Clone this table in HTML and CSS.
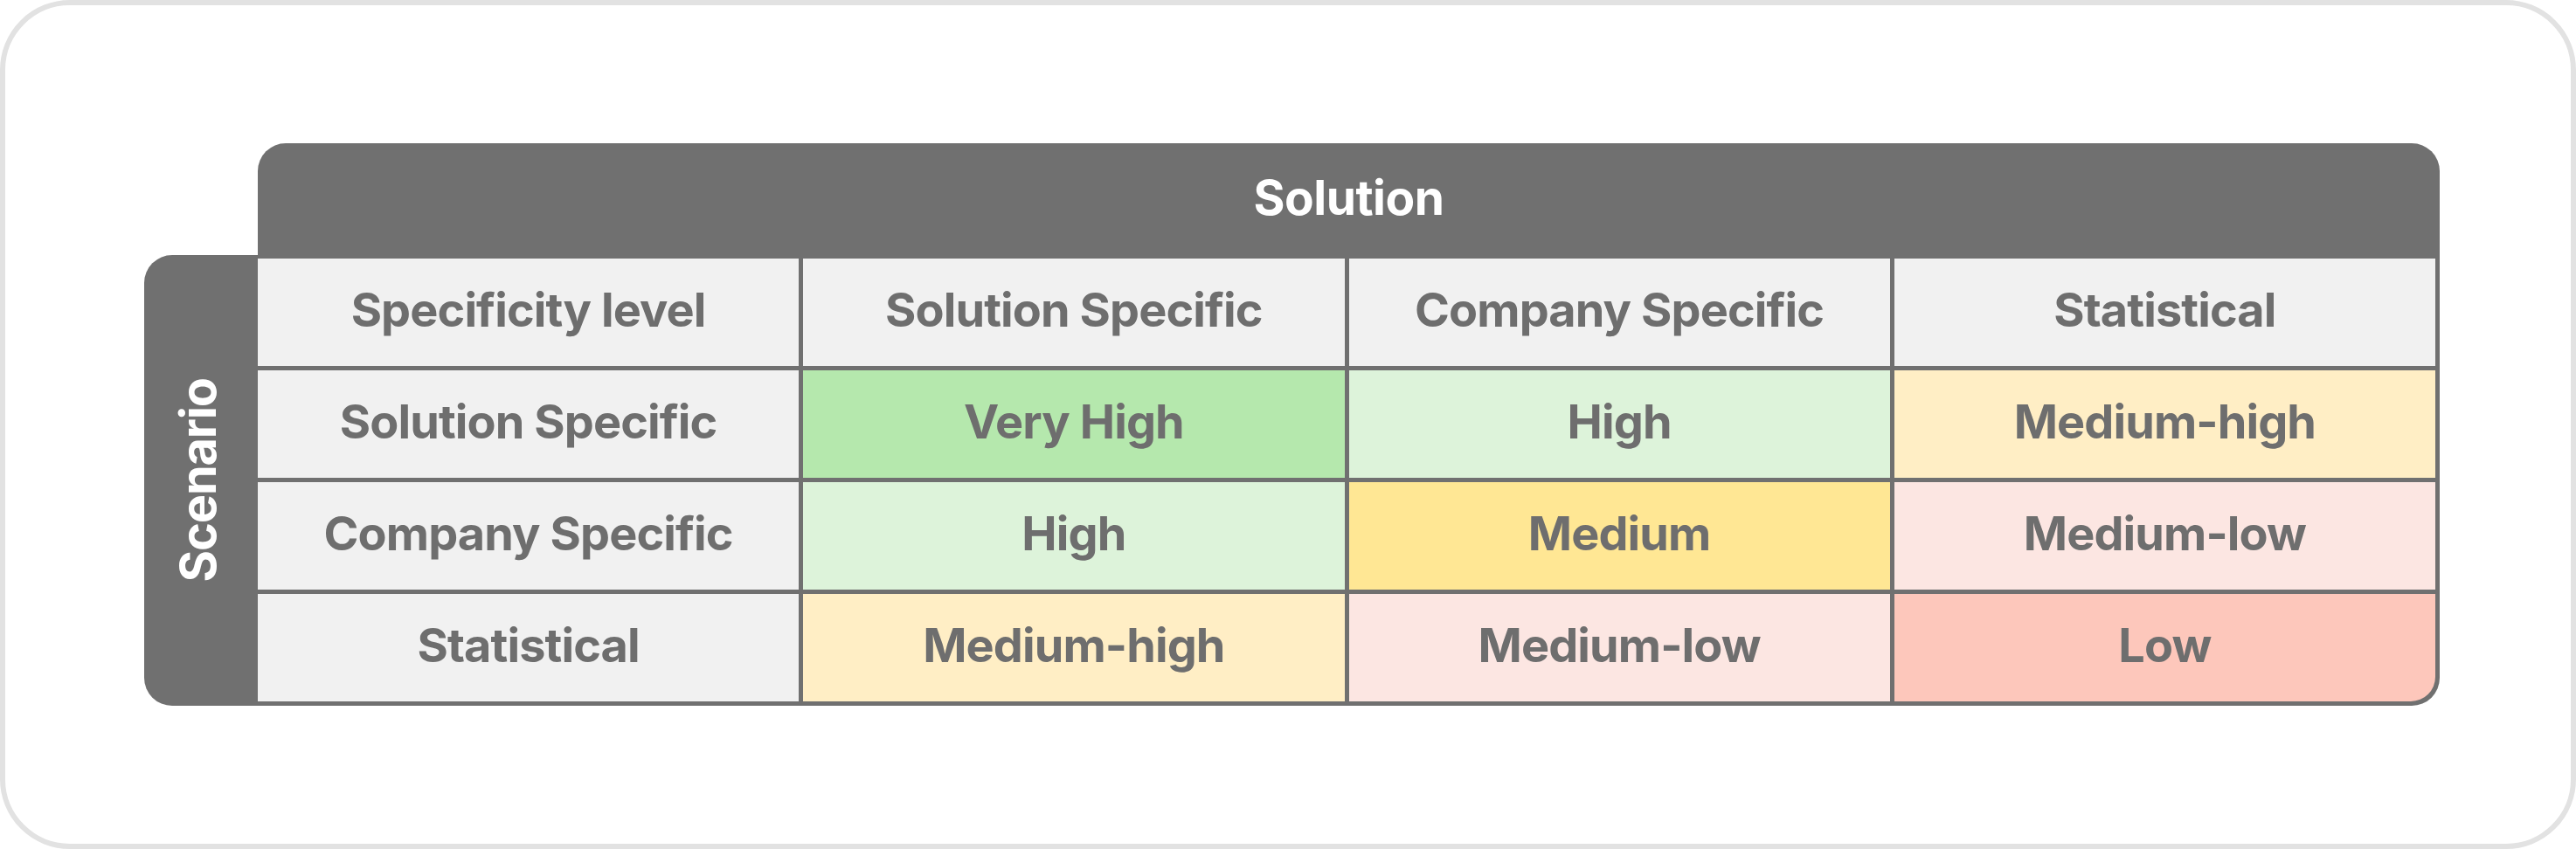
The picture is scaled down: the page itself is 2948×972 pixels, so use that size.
FILE: index.html
```html
<!DOCTYPE html>
<html>
<head>
<meta charset="utf-8">
<link rel="stylesheet" href="styles.css">
</head>
<body>
<div class="frame">
  <div class="matrix">
    <div class="solution">Solution</div>
    <div class="scenario"><span class="scenario-label">Scenario</span></div>
    <div class="grid">
      <div class="cell">Specificity level</div>
      <div class="cell">Solution Specific</div>
      <div class="cell">Company Specific</div>
      <div class="cell">Statistical</div>

      <div class="cell">Solution Specific</div>
      <div class="cell very-high">Very High</div>
      <div class="cell high">High</div>
      <div class="cell medium-high">Medium-high</div>

      <div class="cell">Company Specific</div>
      <div class="cell high">High</div>
      <div class="cell medium">Medium</div>
      <div class="cell medium-low">Medium-low</div>

      <div class="cell">Statistical</div>
      <div class="cell medium-high">Medium-high</div>
      <div class="cell medium-low">Medium-low</div>
      <div class="cell low last">Low</div>
    </div>
  </div>
</div>
</body>
</html>
```
FILE: styles.css
```css
html, body {
  margin: 0;
  padding: 0;
  background: #ffffff;
}

.frame {
  box-sizing: border-box;
  width: 2948px;
  height: 972px;
  border: 6px solid #e2e2e2;
  border-radius: 80px;
  background: #ffffff;
  padding: 158px 0 0 159px;
  font-family: "Inter", "Liberation Sans", sans-serif;
  font-weight: 700;
}

.matrix {
  display: grid;
  grid-template-columns: 130px 2497px;
  grid-template-rows: 132px 512px;
}

.solution {
  grid-column: 2;
  grid-row: 1;
  background: #707070;
  color: #ffffff;
  border-radius: 32px 32px 0 0;
  display: flex;
  align-items: center;
  justify-content: center;
  padding-bottom: 8px;
  font-size: 55px;
  letter-spacing: -0.5px;
}

.scenario {
  grid-column: 1;
  grid-row: 2;
  margin-top: -4px;
  background: #707070;
  border-radius: 32px 0 0 32px;
  display: flex;
  align-items: center;
  justify-content: center;
}

.scenario-label {
  writing-mode: vertical-rl;
  transform: rotate(180deg);
  color: #ffffff;
  font-size: 56px;
  letter-spacing: -1.2px;
  margin-right: 6px;
}

.grid {
  grid-column: 2;
  grid-row: 2;
  display: grid;
  grid-template-columns: repeat(4, 1fr);
  grid-template-rows: repeat(4, 123px);
  gap: 5px;
  padding: 0 5px 5px 0;
  background: #707070;
  border-radius: 0 0 32px 0;
  overflow: hidden;
}

.cell {
  background: #f1f1f1;
  color: #6e6e6e;
  display: flex;
  align-items: center;
  justify-content: center;
  padding-bottom: 6px;
  font-size: 54px;
  letter-spacing: -0.9px;
}

.very-high { background: #b5e8ad; }
.high { background: #ddf3da; }
.medium-high { background: #ffeec5; }
.medium { background: #ffe794; }
.medium-low { background: #fce6e2; }
.low { background: #fdc7bb; }
.last { border-radius: 0 0 28px 0; }
```
